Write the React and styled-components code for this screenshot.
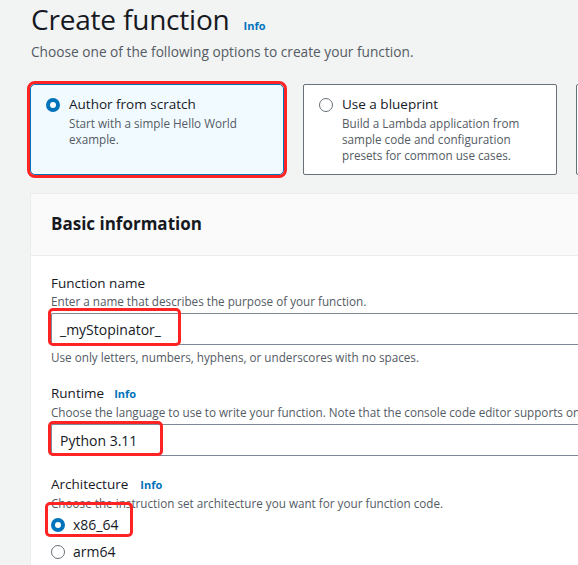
import React from "react";
import styled, { createGlobalStyle } from "styled-components";

const GlobalStyle = createGlobalStyle`
  body {
    margin: 0;
    background: #f2f3f3;
    font-family: "Open Sans", "Noto Sans", sans-serif;
    color: #16191f;
    overflow: hidden;
  }
`;

const Page = styled.div`
  padding: 0 0 0 30px;
  width: 578px;
  height: 565px;
  box-sizing: border-box;
  overflow: hidden;
`;

const TitleRow = styled.div`
  display: flex;
  align-items: baseline;
  gap: 14px;
  padding-left: 1px;
`;

const Title = styled.h1`
  margin: 0;
  font-size: 28px;
  font-weight: 400;
  line-height: 38px;
  letter-spacing: -0.2px;
`;

const InfoLink = styled.a`
  color: #0073bb;
  font-size: 11px;
  font-weight: 700;
  text-decoration: none;
  margin-left: ${(p) => p.$gap || 0}px;
`;

const Subtitle = styled.p`
  margin: 4px 0 0 1px;
  font-size: 13.7px;
  line-height: 20px;
  color: #545b64;
`;

const Cards = styled.div`
  display: flex;
  gap: 19px;
  margin-top: 22px;
`;

const Card = styled.div`
  flex: 0 0 254px;
  height: 91px;
  box-sizing: border-box;
  border: 1px solid ${(p) => (p.$selected ? "#0073bb" : "#687078")};
  background: ${(p) => (p.$selected ? "#f1faff" : "#fff")};
  padding: 9px 15px;
  display: flex;
  gap: 9px;
  outline: ${(p) => (p.$marked ? "3px solid #ff2323" : "none")};
  border-radius: ${(p) => (p.$marked ? "5px" : "2px")};
`;

const Radio = styled.span`
  flex: 0 0 auto;
  width: 14px;
  height: 14px;
  margin-top: ${(p) => (p.$inline ? 0 : 4)}px;
  box-sizing: border-box;
  border-radius: 50%;
  border: ${(p) => (p.$checked ? "4px solid #0073bb" : "1.5px solid #687078")};
  background: #fff;
`;

const CardText = styled.div`
  display: flex;
  flex-direction: column;
`;

const CardTitle = styled.span`
  font-size: 13.5px;
  line-height: 21px;
`;

const CardDesc = styled.span`
  font-size: 11.7px;
  line-height: 16px;
  color: #545b64;
`;

const Panel = styled.section`
  margin-top: 18px;
  background: #fff;
  border-left: 1px solid #eaeded;
  border-top: 1px solid #eaeded;
`;

const PanelHeader = styled.div`
  height: 62px;
  background: #fafafa;
  border-bottom: 1px solid #eaeded;
  padding: 0 20px 3px;
  box-sizing: border-box;
  display: flex;
  align-items: center;
`;

const PanelTitle = styled.h2`
  margin: 0;
  font-size: 17px;
  font-weight: 700;
`;

const PanelBody = styled.div`
  padding: 17px 0 0 20px;
  display: flex;
  flex-direction: column;
  gap: 18px;
`;

const Field = styled.div`
  display: flex;
  flex-direction: column;
`;

const Label = styled.div`
  font-size: 13.5px;
  line-height: 20px;
  display: flex;
  align-items: baseline;
`;

const Hint = styled.div`
  font-size: 11.7px;
  line-height: 16px;
  color: #545b64;
  white-space: nowrap;
`;

const FootHint = styled(Hint)`
  margin-top: 4px;
`;

const Control = styled.div`
  position: relative;
  margin-top: 4px;
`;

const Input = styled.div`
  height: 32px;
  box-sizing: border-box;
  border: 1px solid #7d8998;
  border-right: none;
  border-radius: 2px 0 0 2px;
  padding: 0 8px;
  display: flex;
  align-items: center;
  font-size: 14px;
  color: #16191f;
`;

const Mark = styled.span`
  position: absolute;
  left: ${(p) => p.$left}px;
  top: ${(p) => p.$top}px;
  width: ${(p) => p.$w}px;
  height: ${(p) => p.$h}px;
  box-sizing: border-box;
  border: 3px solid #ff2323;
  border-radius: 5px;
  pointer-events: none;
`;

const Options = styled.div`
  position: relative;
  display: flex;
  flex-direction: column;
`;

const Option = styled.label`
  display: flex;
  align-items: center;
  gap: 8px;
  height: 27px;
  font-size: 14px;
`;

export default function App() {
  return (
    <Page>
      <GlobalStyle />
      <TitleRow>
        <Title>Create function</Title>
        <InfoLink href="#">Info</InfoLink>
      </TitleRow>
      <Subtitle>Choose one of the following options to create your function.</Subtitle>

      <Cards>
        <Card $selected $marked>
          <Radio $checked />
          <CardText>
            <CardTitle>Author from scratch</CardTitle>
            <CardDesc>Start with a simple Hello World example.</CardDesc>
          </CardText>
        </Card>
        <Card>
          <Radio />
          <CardText>
            <CardTitle>Use a blueprint</CardTitle>
            <CardDesc>
              Build a Lambda application from sample code and configuration presets for common use cases.
            </CardDesc>
          </CardText>
        </Card>
        <Card />
      </Cards>

      <Panel>
        <PanelHeader>
          <PanelTitle>Basic information</PanelTitle>
        </PanelHeader>
        <PanelBody>
          <Field>
            <Label>Function name</Label>
            <Hint>Enter a name that describes the purpose of your function.</Hint>
            <Control>
              <Input>_myStopinator_</Input>
              <Mark $left={-3} $top={-5} $w={133} $h={38} />
            </Control>
            <FootHint>Use only letters, numbers, hyphens, or underscores with no spaces.</FootHint>
          </Field>

          <Field>
            <Label>
              Runtime <InfoLink href="#" $gap={10}>Info</InfoLink>
            </Label>
            <Hint>Choose the language to use to write your function. Note that the console code editor supports on</Hint>
            <Control>
              <Input>Python 3.11</Input>
              <Mark $left={-3} $top={-3} $w={115} $h={35} />
            </Control>
          </Field>

          <Field>
            <Label>
              Architecture <InfoLink href="#" $gap={12}>Info</InfoLink>
            </Label>
            <Hint>Choose the instruction set architecture you want for your function code.</Hint>
            <Options>
              <Option>
                <Radio $inline $checked />
                x86_64
              </Option>
              <Option>
                <Radio $inline />
                arm64
              </Option>
              <Mark $left={-6} $top={-9} $w={88} $h={35} />
            </Options>
          </Field>
        </PanelBody>
      </Panel>
    </Page>
  );
}
